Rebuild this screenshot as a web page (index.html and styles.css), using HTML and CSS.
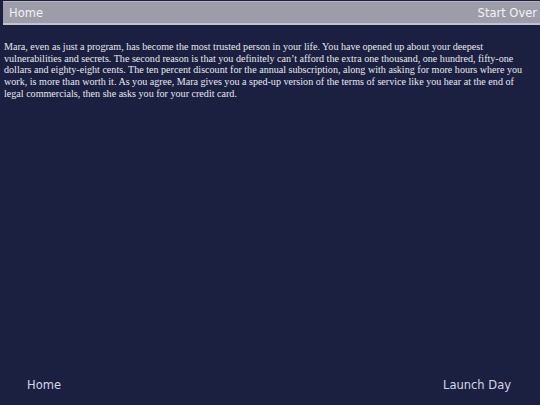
FILE: index.html
```html
<!DOCTYPE html>
<html>
<head>
<meta charset="utf-8">
<link rel="stylesheet" href="styles.css">
</head>
<body>
<div class="page">
  <header class="topbar">
    <a class="nav-link">Home</a>
    <a class="nav-link">Start Over</a>
  </header>
  <main class="story">
    <p>Mara, even as just a program, has become the most trusted person in your life. You have opened up about your deepest vulnerabilities and secrets. The second reason is that you definitely can’t afford the extra one thousand, one hundred, fifty-one dollars and eighty-eight cents. The ten percent discount for the annual subscription, along with asking for more hours where you work, is more than worth it. As you agree, Mara gives you a sped-up version of the terms of service like you hear at the end of legal commercials, then she asks you for your credit card.</p>
  </main>
  <footer class="choices">
    <a class="choice">Home</a>
    <a class="choice">Launch Day</a>
  </footer>
</div>
</body>
</html>
```
FILE: styles.css
```css
html, body {
  margin: 0;
  padding: 0;
  background: #1b2041;
}
.page {
  width: 540px;
  height: 405px;
  display: flex;
  flex-direction: column;
}
.topbar {
  margin: 1px 0 0 3px;
  height: 21px;
  background: #9c9da8;
  border-top: 1px solid #b4b5bf;
  border-bottom: 2px solid #c2c3cc;
  display: flex;
  justify-content: space-between;
  align-items: center;
  padding: 0 3px 0 6px;
  font-family: "DejaVu Sans", sans-serif;
  font-size: 11.5px;
  color: #f2f2f6;
}
.story {
  flex: 1;
  padding: 16px 11px 0 4px;
}
.story p {
  margin: 0;
  font-family: "Liberation Serif", serif;
  font-size: 10.1px;
  line-height: 11.65px;
  color: #e8e8ef;
}
.choices {
  display: flex;
  justify-content: space-between;
  padding: 0 29px 13px 27px;
  font-family: "DejaVu Sans", sans-serif;
  font-size: 11.5px;
  color: #d4d6e4;
}
.nav-link, .choice {
  cursor: pointer;
}
```
